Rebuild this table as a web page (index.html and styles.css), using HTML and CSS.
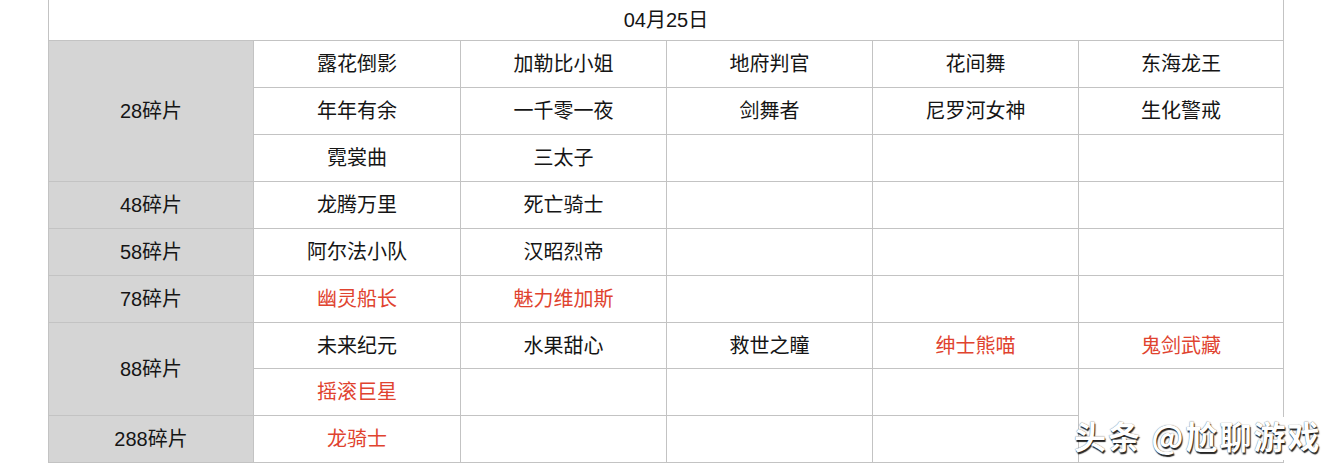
FILE: index.html
```html
<!DOCTYPE html>
<html lang="zh">
<head>
<meta charset="utf-8">
<link rel="stylesheet" href="styles.css">
</head>
<body>
<div class="page">
<table class="grid">
  <colgroup>
    <col class="c0"><col class="c1"><col class="c2"><col class="c3"><col class="c4"><col class="c5">
  </colgroup>
  <tr class="head"><td colspan="6">04月25日</td></tr>
  <tr><td class="lab" rowspan="3">28碎片</td><td>露花倒影</td><td>加勒比小姐</td><td>地府判官</td><td>花间舞</td><td>东海龙王</td></tr>
  <tr><td>年年有余</td><td>一千零一夜</td><td>剑舞者</td><td>尼罗河女神</td><td>生化警戒</td></tr>
  <tr><td>霓裳曲</td><td>三太子</td><td></td><td></td><td></td></tr>
  <tr><td class="lab">48碎片</td><td>龙腾万里</td><td>死亡骑士</td><td></td><td></td><td></td></tr>
  <tr><td class="lab">58碎片</td><td>阿尔法小队</td><td>汉昭烈帝</td><td></td><td></td><td></td></tr>
  <tr><td class="lab">78碎片</td><td class="red">幽灵船长</td><td class="red">魅力维加斯</td><td></td><td></td><td></td></tr>
  <tr class="short"><td class="lab" rowspan="2">88碎片</td><td>未来纪元</td><td>水果甜心</td><td>救世之瞳</td><td class="red">绅士熊喵</td><td class="red">鬼剑武藏</td></tr>
  <tr><td class="red">摇滚巨星</td><td></td><td></td><td></td><td rowspan="2"></td></tr>
  <tr><td class="lab">288碎片</td><td class="red">龙骑士</td><td></td><td></td><td></td></tr>
</table>
<div class="mark">头条 @尬聊游戏</div>
</div>
</body>
</html>
```
FILE: styles.css
```css
html, body {
  margin: 0;
  padding: 0;
  background: #fff;
}
.page {
  position: relative;
  width: 1334px;
  height: 464px;
  overflow: hidden;
  font-family: "Liberation Sans", "Noto Sans CJK SC", sans-serif;
}
.grid {
  margin-left: 48px;
  width: 1236px;
  border-collapse: collapse;
  table-layout: fixed;
  font-size: 20px;
  color: #151515;
}
.c0 { width: 205px; }
.c1 { width: 207px; }
.c2, .c3, .c4 { width: 206px; }
.c5 { width: 205px; }
.grid td {
  border: 1px solid #c3c3c3;
  text-align: center;
  vertical-align: middle;
  padding: 0;
  height: 46px;
  line-height: 26px;
}
.grid tr.head td {
  border-top: none;
  height: 40px;
  font-size: 20px;
}
.grid tr.short td { height: 45px; }
.grid td.lab {
  background: #d5d5d5;
}
.grid td.red {
  color: #e0432f;
}
.mark {
  position: absolute;
  left: 1079px;
  top: 417px;
  width: 250px;
  height: 43px;
  background: #fff;
  font-family: "Noto Sans CJK SC", sans-serif;
  font-size: 32px;
  line-height: 36px;
  letter-spacing: 2px;
  color: #fff;
  font-weight: 700;
  text-shadow: 1px 2px 1px rgba(0,0,0,0.85), 0 0 1px rgba(0,0,0,0.7);
  white-space: nowrap;
  text-indent: -5px;
}
```
